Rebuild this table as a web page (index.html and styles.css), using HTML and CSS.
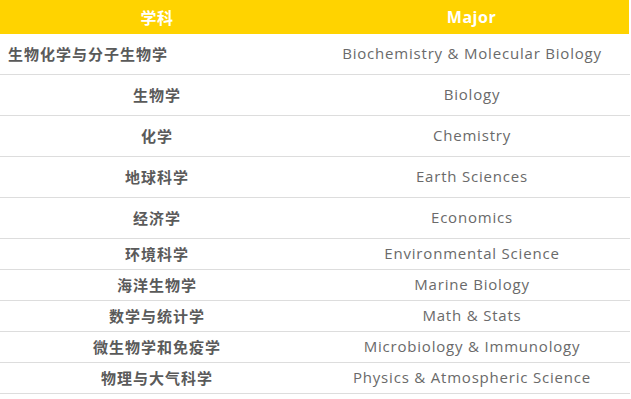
FILE: index.html
```html
<!DOCTYPE html>
<html lang="zh-CN">
<head>
<meta charset="utf-8">
<title>学科 Major</title>
<link rel="stylesheet" href="styles.css">
</head>
<body>
<div class="table">
  <div class="head">
    <div class="hcell">学科</div>
    <div class="hcell">Major</div>
  </div>
  <div class="row tall"><div class="zh left">生物化学与分子生物学</div><div class="en">Biochemistry &amp; Molecular Biology</div></div>
  <div class="row tall"><div class="zh">生物学</div><div class="en">Biology</div></div>
  <div class="row tall"><div class="zh">化学</div><div class="en">Chemistry</div></div>
  <div class="row tall"><div class="zh">地球科学</div><div class="en">Earth Sciences</div></div>
  <div class="row tall"><div class="zh">经济学</div><div class="en">Economics</div></div>
  <div class="row"><div class="zh">环境科学</div><div class="en">Environmental Science</div></div>
  <div class="row"><div class="zh">海洋生物学</div><div class="en">Marine Biology</div></div>
  <div class="row"><div class="zh">数学与统计学</div><div class="en">Math &amp; Stats</div></div>
  <div class="row"><div class="zh">微生物学和免疫学</div><div class="en">Microbiology &amp; Immunology</div></div>
  <div class="row"><div class="zh">物理与大气科学</div><div class="en">Physics &amp; Atmospheric Science</div></div>
</div>
</body>
</html>
```

FILE: styles.css
```css
html, body {
  margin: 0;
  padding: 0;
  background: #ffffff;
}
body {
  font-family: "Open Sans", "Noto Sans CJK SC", sans-serif;
}
.table {
  width: 630px;
}
.head {
  display: grid;
  grid-template-columns: 314px 1fr;
  height: 34px;
  background: #ffd300;
  width: 629px;
}
.hcell {
  display: flex;
  align-items: center;
  justify-content: center;
  padding-bottom: 1px;
  color: #ffffff;
  font-weight: 700;
  font-size: 16px;
  letter-spacing: 0.5px;
  font-family: "Open Sans", "Noto Sans CJK SC", sans-serif;
}
.row {
  display: grid;
  grid-template-columns: 314px 1fr;
  height: 30px;
  border-bottom: 1px solid #dddddd;
}
.row.tall {
  height: 40px;
}
.zh {
  display: flex;
  align-items: center;
  justify-content: center;
  padding-bottom: 1px;
  font-family: "Noto Sans CJK SC", sans-serif;
  font-weight: 700;
  font-size: 15px;
  letter-spacing: 1px;
  color: #5a5a5a;
}
.zh.left {
  justify-content: flex-start;
  padding-left: 8px;
}
.en {
  display: flex;
  align-items: center;
  justify-content: center;
  padding-bottom: 2px;
  font-family: "Open Sans", sans-serif;
  font-size: 15px;
  letter-spacing: 0.8px;
  color: #6a6a6a;
}
```
